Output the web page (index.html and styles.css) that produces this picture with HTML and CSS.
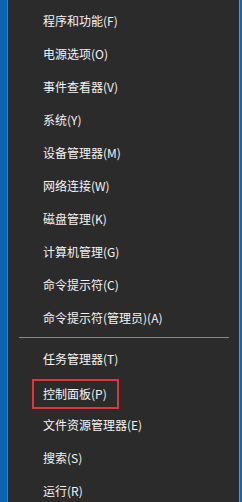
FILE: index.html
```html
<!DOCTYPE html>
<html>
    <head>
        <meta charset="utf-8">
        <link rel="stylesheet" href="styles.css">
    </head>
    <body>

        <div class="desktop">
            <div class="strip"></div>
            <ul class="menu">
                <li>程序和功能(F)</li>
                <li>电源选项(O)</li>
                <li>事件查看器(V)</li>
                <li>系统(Y)</li>
                <li>设备管理器(M)</li>
                <li>网络连接(W)</li>
                <li>磁盘管理(K)</li>
                <li>计算机管理(G)</li>
                <li>命令提示符(C)</li>
                <li>命令提示符(管理员)(A)</li>
                <li class="separator"></li>
                <li>任务管理器(T)</li>
                <li><span class="mark">控制面板(P)</span></li>
                <li>文件资源管理器(E)</li>
                <li>搜索(S)</li>
                <li>运行(R)</li>
            </ul>
            <div class="edge"></div>
        </div>

    </body>
</html>
```

FILE: styles.css
```css
* { margin: 0; padding: 0; box-sizing: border-box; font-family: "Microsoft YaHei", "Noto Sans CJK SC", sans-serif; font-size: 12px; color: #f4f4f4; }
html, body { width: 100%; height: 100%; background: #2b2b2b; overflow: hidden; }

.desktop { display: flex; flex-direction: row; height: 100%; }
.strip { width: 8px; background: #0b63b3; border-right: 1px solid #3f7dbf; }

.menu { flex: 1; list-style: none; padding-top: 4px; background: #2b2b2b; }
.menu li { height: 33px; line-height: 33px; padding-left: 35px; white-space: nowrap; }
.menu li.separator { height: 1px; margin: 3px 10px 4px 11px; padding: 0; background: #8a8a8a; }
.menu .mark { display: inline-block; height: 30px; line-height: 26px; margin-left: -11px; padding: 0 10px 0 9px; border: 2px solid #e0363a; vertical-align: middle; }

.edge { width: 3px; background: #1565b0; border-left: 1px solid #7d8c9c; }
```
